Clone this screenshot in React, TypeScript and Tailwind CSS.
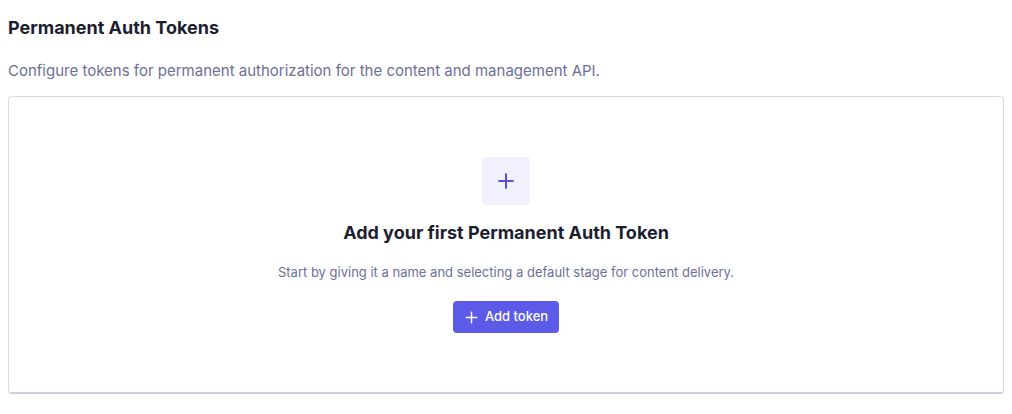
const PlusIcon = ({ className }: { className?: string }) => (
  <svg viewBox="0 0 16 16" fill="none" className={className}>
    <path d="M8 2.5v11M2.5 8h11" stroke="currentColor" strokeWidth="1.6" strokeLinecap="round" />
  </svg>
);

const App = () => {
  return (
    <main className="w-[1012px] h-[414px] bg-white px-2 pt-[14px] font-['Inter',sans-serif]">
      <h2 className="text-[18px] leading-7 font-bold text-[#1d1e2f]">Permanent Auth Tokens</h2>
      <p className="mt-[17px] text-[15px] leading-6 text-[#6c6f99]">
        Configure tokens for permanent authorization for the content and management API.
      </p>
      <section className="mt-[13px] w-[996px] h-[298px] border border-[#d9dae8] border-b-[#cfcfe0] border-b-2 rounded-[4px] flex flex-col items-center pt-[60px]">
        <div className="w-12 h-12 rounded-[4px] bg-[#f1f0fd] flex items-center justify-center text-[#5b4de3]">
          <PlusIcon className="w-5 h-5" />
        </div>
        <h3 className="mt-[14px] text-[18px] leading-7 font-bold text-[#1d1e2f]">Add your first Permanent Auth Token</h3>
        <p className="mt-[15px] text-[13px] leading-5 text-[#6c6f99]">
          Start by giving it a name and selecting a default stage for content delivery.
        </p>
        <button className="mt-[19px] h-8 w-[106px] rounded-[4px] bg-[#5b5be8] text-white text-[13px] font-medium flex items-center justify-center gap-[6px]">
          <PlusIcon className="w-[15px] h-[15px]" />
          Add token
        </button>
      </section>
    </main>
  );
};

export default App;
